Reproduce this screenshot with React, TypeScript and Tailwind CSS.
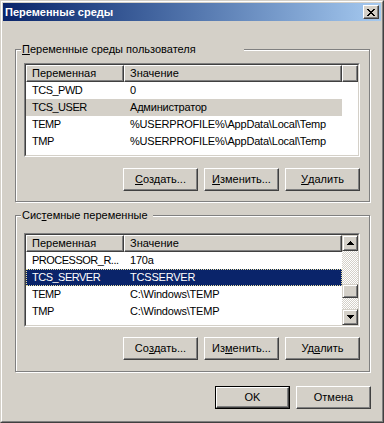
import type { ReactNode } from "react"

const userRows = [
    ["TCS_PWD", "0"],
    ["TCS_USER", "Администратор"],
    ["TEMP", "%USERPROFILE%\\AppData\\Local\\Temp"],
    ["TMP", "%USERPROFILE%\\AppData\\Local\\Temp"],
]

const sysRows = [
    ["PROCESSOR_R...", "170a"],
    ["TCS_SERVER", "TCSSERVER"],
    ["TEMP", "C:\\Windows\\TEMP"],
    ["TMP", "C:\\Windows\\TEMP"],
]

function Btn({ children, def }: { children: ReactNode; def?: boolean }) {
    const face = (
        <span className="flex flex-1 items-center justify-center self-stretch border border-t-white border-l-white border-r-[#404040] border-b-[#404040] shadow-[inset_-1px_-1px_0_#808080] bg-[#d4d0c8]">
            {children}
        </span>
    )
    return (
        <button className={"flex w-[75px] h-[23px] text-black " + (def ? "border border-black" : "")}>{face}</button>
    )
}

function Group({ label, labelW, className, children }: { label: ReactNode; labelW: string; className: string; children: ReactNode }) {
    return (
        <div
            className={
                "relative ml-[12px] w-[355px] border border-[#808080] shadow-[inset_1px_1px_0_#fff,1px_1px_0_#fff] px-[8px] " +
                className
            }
        >
            <span className={"absolute left-[5px] -top-[7px] h-[13px] bg-[#d4d0c8] pl-[1px] leading-[13px] " + labelW}>
                {label}
            </span>
            {children}
        </div>
    )
}

function Arrow({ down }: { down?: boolean }) {
    return (
        <svg width="7" height="4" viewBox="0 0 7 4" shapeRendering="crispEdges" className={down ? "rotate-180" : ""}>
            <path d="M3 0h1v1H3z M2 1h3v1H2z M1 2h5v1H1z M0 3h7v1H0z" fill="#000" />
        </svg>
    )
}

function ScrollBtn({ children, h }: { children?: ReactNode; h: string }) {
    return (
        <div
            className={
                "flex items-center justify-center border border-t-[#d4d0c8] border-l-[#d4d0c8] border-r-[#404040] border-b-[#404040] shadow-[inset_1px_1px_0_#fff,inset_-1px_-1px_0_#808080] bg-[#d4d0c8] " +
                h
            }
        >
            {children}
        </div>
    )
}

function ListView({ rows, sel, active, scroll }: { rows: string[][]; sel: number; active?: boolean; scroll?: boolean }) {
    const head = "border border-t-white border-l-white border-r-[#404040] border-b-[#404040] shadow-[inset_-1px_-1px_0_#808080] bg-[#d4d0c8] leading-[15px]"
    return (
        <div className="w-[336px] h-[94px] border border-t-[#808080] border-l-[#808080] border-r-white border-b-white">
            <div className="flex h-full overflow-hidden border border-t-[#404040] border-l-[#404040] border-r-[#d4d0c8] border-b-[#d4d0c8] bg-white">
                <div className="flex flex-1 flex-col">
                    <div className="flex h-[17px]">
                        <div className={"w-[98px] pl-[5px] " + head}>Переменная</div>
                        <div className={"w-[218px] pl-[5px] " + head}>Значение</div>
                        {!scroll && <div className={"flex-1 " + head} />}
                    </div>
                    {rows.map((r, i) => {
                        const on = i === sel
                        const cls = on
                            ? active
                                ? "bg-[#0a246a] text-white outline-1 outline-dotted -outline-offset-1 outline-[#e8e0a0]"
                                : "bg-[#d4d0c8]"
                            : ""
                        return (
                            <div key={i} className={"flex w-[316px] h-[17px] leading-[17px] whitespace-nowrap " + cls}>
                                <div className="w-[98px] pl-[6px] overflow-hidden tracking-[-0.5px]">{r[0]}</div>
                                <div className="w-[218px] pl-[6px] overflow-hidden tracking-[-0.2px]">{r[1]}</div>
                            </div>
                        )
                    })}
                </div>
                {scroll && (
                    <div className="flex w-[16px] flex-col">
                        <ScrollBtn h="h-[16px]">
                            <Arrow />
                        </ScrollBtn>
                        <div className="flex-1 pt-[33px] bg-[image:repeating-conic-gradient(#fff_0_25%,#d4d0c8_0_50%)] bg-[length:2px_2px]">
                            <ScrollBtn h="h-[14px]" />
                        </div>
                        <ScrollBtn h="h-[16px]">
                            <Arrow down />
                        </ScrollBtn>
                    </div>
                )}
            </div>
        </div>
    )
}

export default function App() {
    return (
        <div className="w-[384px] h-[423px] bg-[#d4d0c8] border border-t-[#d4d0c8] border-l-[#d4d0c8] border-r-[#404040] border-b-[#404040] font-['Liberation_Sans',Arial,sans-serif] text-[11px] text-black">
            <div className="flex h-full flex-col border border-t-white border-l-white border-r-[#808080] border-b-[#808080] p-[1px]">
                <div className="flex h-[18px] items-center justify-between bg-linear-to-r from-[#0a246a] to-[#a6caf0] pl-[2px] pr-[2px]">
                    <span className="font-bold text-white leading-[18px]">Переменные среды</span>
                    <div className="flex w-[16px] h-[14px] items-center justify-center border border-t-white border-l-white border-r-[#404040] border-b-[#404040] shadow-[inset_-1px_-1px_0_#808080] bg-[#d4d0c8]">
                        <svg width="8" height="7" viewBox="0 0 8 7" shapeRendering="crispEdges">
                            <path
                                d="M0 0h2v1H0z M6 0h2v1H6z M1 1h2v1H1z M5 1h2v1H5z M2 2h4v1H2z M3 3h2v1H3z M2 4h4v1H2z M1 5h2v1H1z M5 5h2v1H5z M0 6h2v1H0z M6 6h2v1H6z"
                                fill="#000"
                            />
                        </svg>
                    </div>
                </div>

                <Group
                    className="mt-[28px] pt-[13px] pb-[10px]"
                    labelW="w-[223px]"
                    label={
                        <>
                            <u>П</u>еременные среды пользователя
                        </>
                    }
                >
                    <ListView rows={userRows} sel={1} />
                    <div className="mt-[11px] flex w-[336px] justify-end gap-[6px]">
                        <Btn>
                            <u>С</u>оздать...
                        </Btn>
                        <Btn>
                            <u>И</u>зменить...
                        </Btn>
                        <Btn>
                            <u>У</u>далить
                        </Btn>
                    </div>
                </Group>

                <Group
                    className="mt-[13px] pt-[17px] pb-[11px]"
                    labelW="w-[132px]"
                    label={
                        <>
                            Сис<u>т</u>емные переменные
                        </>
                    }
                >
                    <ListView rows={sysRows} sel={1} active scroll />
                    <div className="mt-[10px] flex w-[336px] justify-end gap-[6px]">
                        <Btn>
                            Со<u>з</u>дать...
                        </Btn>
                        <Btn>
                            Из<u>м</u>енить...
                        </Btn>
                        <Btn>
                            Уд<u>а</u>лить
                        </Btn>
                    </div>
                </Group>

                <div className="mt-[14px] ml-[12px] flex w-[356px] justify-end gap-[6px]">
                    <Btn def>OK</Btn>
                    <Btn>Отмена</Btn>
                </div>
            </div>
        </div>
    )
}
